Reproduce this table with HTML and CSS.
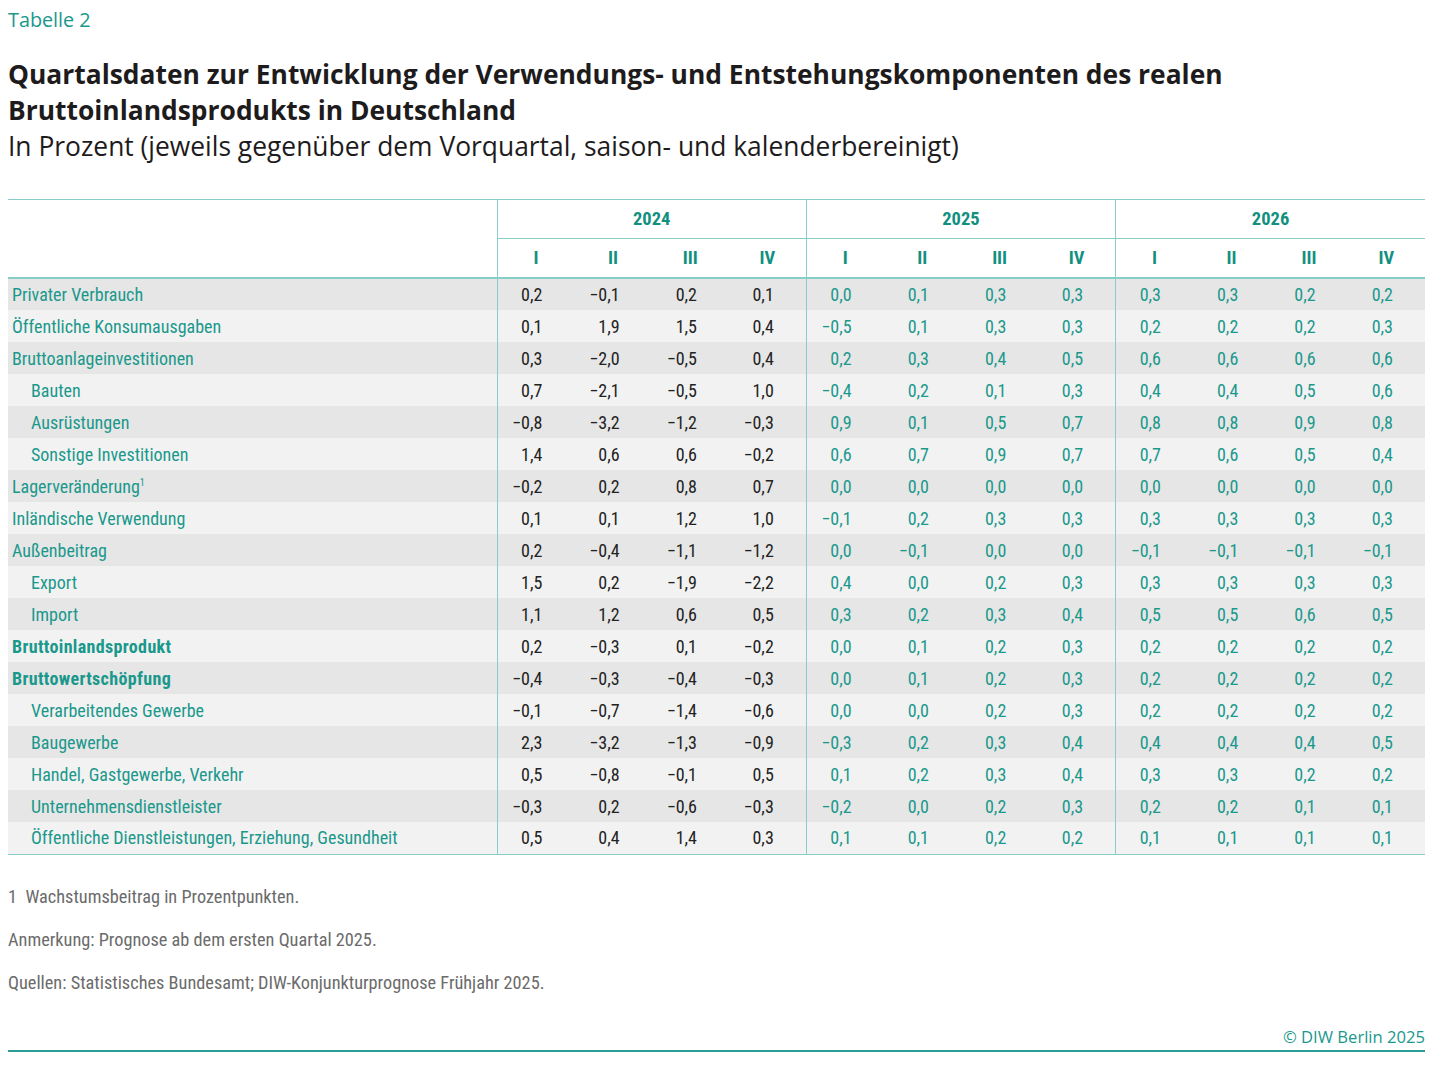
FILE: index.html
```html
<!DOCTYPE html>
<html lang="de">
<head>
<meta charset="utf-8">
<title>Tabelle 2</title>
<link rel="stylesheet" href="styles.css">
</head>
<body>
<div class="page">
  <div class="kicker">Tabelle 2</div>
  <h1 class="title">Quartalsdaten zur Entwicklung der Verwendungs- und Entstehungskomponenten des realen Bruttoinlandsprodukts in Deutschland</h1>
  <div class="subtitle">In Prozent (jeweils gegenüber dem Vorquartal, saison- und kalenderbereinigt)</div>

  <table class="data">
    <colgroup>
      <col class="c-label">
      <col><col><col><col>
      <col><col><col><col>
      <col><col><col><col>
    </colgroup>
    <thead>
      <tr class="yr">
        <th class="blank" rowspan="2"></th>
        <th colspan="4" class="grp">2024</th>
        <th colspan="4" class="grp">2025</th>
        <th colspan="4" class="grp">2026</th>
      </tr>
      <tr class="q">
        <th class="gs">I</th><th>II</th><th>III</th><th>IV</th>
        <th class="gs">I</th><th>II</th><th>III</th><th>IV</th>
        <th class="gs">I</th><th>II</th><th>III</th><th>IV</th>
      </tr>
    </thead>
    <tbody>
      <tr><th>Privater Verbrauch</th>
        <td class="gs">0,2</td><td>−0,1</td><td>0,2</td><td>0,1</td>
        <td class="gs f">0,0</td><td class="f">0,1</td><td class="f">0,3</td><td class="f">0,3</td>
        <td class="gs f">0,3</td><td class="f">0,3</td><td class="f">0,2</td><td class="f">0,2</td></tr>
      <tr><th>Öffentliche Konsumausgaben</th>
        <td class="gs">0,1</td><td>1,9</td><td>1,5</td><td>0,4</td>
        <td class="gs f">−0,5</td><td class="f">0,1</td><td class="f">0,3</td><td class="f">0,3</td>
        <td class="gs f">0,2</td><td class="f">0,2</td><td class="f">0,2</td><td class="f">0,3</td></tr>
      <tr><th>Bruttoanlageinvestitionen</th>
        <td class="gs">0,3</td><td>−2,0</td><td>−0,5</td><td>0,4</td>
        <td class="gs f">0,2</td><td class="f">0,3</td><td class="f">0,4</td><td class="f">0,5</td>
        <td class="gs f">0,6</td><td class="f">0,6</td><td class="f">0,6</td><td class="f">0,6</td></tr>
      <tr><th class="ind">Bauten</th>
        <td class="gs">0,7</td><td>−2,1</td><td>−0,5</td><td>1,0</td>
        <td class="gs f">−0,4</td><td class="f">0,2</td><td class="f">0,1</td><td class="f">0,3</td>
        <td class="gs f">0,4</td><td class="f">0,4</td><td class="f">0,5</td><td class="f">0,6</td></tr>
      <tr><th class="ind">Ausrüstungen</th>
        <td class="gs">−0,8</td><td>−3,2</td><td>−1,2</td><td>−0,3</td>
        <td class="gs f">0,9</td><td class="f">0,1</td><td class="f">0,5</td><td class="f">0,7</td>
        <td class="gs f">0,8</td><td class="f">0,8</td><td class="f">0,9</td><td class="f">0,8</td></tr>
      <tr><th class="ind">Sonstige Investitionen</th>
        <td class="gs">1,4</td><td>0,6</td><td>0,6</td><td>−0,2</td>
        <td class="gs f">0,6</td><td class="f">0,7</td><td class="f">0,9</td><td class="f">0,7</td>
        <td class="gs f">0,7</td><td class="f">0,6</td><td class="f">0,5</td><td class="f">0,4</td></tr>
      <tr><th>Lagerveränderung<sup>1</sup></th>
        <td class="gs">−0,2</td><td>0,2</td><td>0,8</td><td>0,7</td>
        <td class="gs f">0,0</td><td class="f">0,0</td><td class="f">0,0</td><td class="f">0,0</td>
        <td class="gs f">0,0</td><td class="f">0,0</td><td class="f">0,0</td><td class="f">0,0</td></tr>
      <tr><th>Inländische Verwendung</th>
        <td class="gs">0,1</td><td>0,1</td><td>1,2</td><td>1,0</td>
        <td class="gs f">−0,1</td><td class="f">0,2</td><td class="f">0,3</td><td class="f">0,3</td>
        <td class="gs f">0,3</td><td class="f">0,3</td><td class="f">0,3</td><td class="f">0,3</td></tr>
      <tr><th>Außenbeitrag</th>
        <td class="gs">0,2</td><td>−0,4</td><td>−1,1</td><td>−1,2</td>
        <td class="gs f">0,0</td><td class="f">−0,1</td><td class="f">0,0</td><td class="f">0,0</td>
        <td class="gs f">−0,1</td><td class="f">−0,1</td><td class="f">−0,1</td><td class="f">−0,1</td></tr>
      <tr><th class="ind">Export</th>
        <td class="gs">1,5</td><td>0,2</td><td>−1,9</td><td>−2,2</td>
        <td class="gs f">0,4</td><td class="f">0,0</td><td class="f">0,2</td><td class="f">0,3</td>
        <td class="gs f">0,3</td><td class="f">0,3</td><td class="f">0,3</td><td class="f">0,3</td></tr>
      <tr><th class="ind">Import</th>
        <td class="gs">1,1</td><td>1,2</td><td>0,6</td><td>0,5</td>
        <td class="gs f">0,3</td><td class="f">0,2</td><td class="f">0,3</td><td class="f">0,4</td>
        <td class="gs f">0,5</td><td class="f">0,5</td><td class="f">0,6</td><td class="f">0,5</td></tr>
      <tr><th class="strong">Bruttoinlandsprodukt</th>
        <td class="gs">0,2</td><td>−0,3</td><td>0,1</td><td>−0,2</td>
        <td class="gs f">0,0</td><td class="f">0,1</td><td class="f">0,2</td><td class="f">0,3</td>
        <td class="gs f">0,2</td><td class="f">0,2</td><td class="f">0,2</td><td class="f">0,2</td></tr>
      <tr><th class="strong">Bruttowertschöpfung</th>
        <td class="gs">−0,4</td><td>−0,3</td><td>−0,4</td><td>−0,3</td>
        <td class="gs f">0,0</td><td class="f">0,1</td><td class="f">0,2</td><td class="f">0,3</td>
        <td class="gs f">0,2</td><td class="f">0,2</td><td class="f">0,2</td><td class="f">0,2</td></tr>
      <tr><th class="ind">Verarbeitendes Gewerbe</th>
        <td class="gs">−0,1</td><td>−0,7</td><td>−1,4</td><td>−0,6</td>
        <td class="gs f">0,0</td><td class="f">0,0</td><td class="f">0,2</td><td class="f">0,3</td>
        <td class="gs f">0,2</td><td class="f">0,2</td><td class="f">0,2</td><td class="f">0,2</td></tr>
      <tr><th class="ind">Baugewerbe</th>
        <td class="gs">2,3</td><td>−3,2</td><td>−1,3</td><td>−0,9</td>
        <td class="gs f">−0,3</td><td class="f">0,2</td><td class="f">0,3</td><td class="f">0,4</td>
        <td class="gs f">0,4</td><td class="f">0,4</td><td class="f">0,4</td><td class="f">0,5</td></tr>
      <tr><th class="ind">Handel, Gastgewerbe, Verkehr</th>
        <td class="gs">0,5</td><td>−0,8</td><td>−0,1</td><td>0,5</td>
        <td class="gs f">0,1</td><td class="f">0,2</td><td class="f">0,3</td><td class="f">0,4</td>
        <td class="gs f">0,3</td><td class="f">0,3</td><td class="f">0,2</td><td class="f">0,2</td></tr>
      <tr><th class="ind">Unternehmensdienstleister</th>
        <td class="gs">−0,3</td><td>0,2</td><td>−0,6</td><td>−0,3</td>
        <td class="gs f">−0,2</td><td class="f">0,0</td><td class="f">0,2</td><td class="f">0,3</td>
        <td class="gs f">0,2</td><td class="f">0,2</td><td class="f">0,1</td><td class="f">0,1</td></tr>
      <tr><th class="ind">Öffentliche Dienstleistungen, Erziehung, Gesundheit</th>
        <td class="gs">0,5</td><td>0,4</td><td>1,4</td><td>0,3</td>
        <td class="gs f">0,1</td><td class="f">0,1</td><td class="f">0,2</td><td class="f">0,2</td>
        <td class="gs f">0,1</td><td class="f">0,1</td><td class="f">0,1</td><td class="f">0,1</td></tr>
    </tbody>
  </table>

  <div class="notes">
    <p class="note">1&nbsp;&nbsp;Wachstumsbeitrag in Prozentpunkten.</p>
    <p class="note">Anmerkung: Prognose ab dem ersten Quartal 2025.</p>
    <p class="note">Quellen: Statistisches Bundesamt; DIW-Konjunkturprognose Frühjahr 2025.</p>
  </div>

  <div class="credit">© DIW Berlin 2025</div>
</div>
</body>
</html>
```

FILE: styles.css
```css
html, body {
  margin: 0;
  padding: 0;
  background: #ffffff;
}

.page {
  width: 1417px;
  margin-left: 8px;
  padding-top: 8px;
  font-family: "Open Sans", "Noto Sans", sans-serif;
  color: #1e1e1e;
}

.kicker {
  font-size: 19.8px;
  line-height: 24px;
  font-weight: 500;
  color: #1a988c;
  margin-bottom: 24px;
}

.title {
  margin: 0;
  font-size: 26.4px;
  line-height: 36px;
  font-weight: 700;
  color: #1e1b1c;
}

.subtitle {
  font-size: 26.4px;
  line-height: 36px;
  font-weight: 400;
  color: #1e1b1c;
  margin-bottom: 35px;
}

.data {
  width: 1417px;
  border-collapse: collapse;
  table-layout: fixed;
  font-family: "Roboto Condensed", "Roboto", sans-serif;
  font-stretch: 75%;
  font-size: 18px;
}

.c-label {
  width: 489px;
}

.data thead th {
  background: #ffffff;
  color: #12907f;
  font-weight: 700;
  font-size: 18.5px;
  text-align: center;
  height: 38px;
  padding: 0;
}

.data thead tr.yr th {
  border-top: 1px solid #86cec7;
}

.data thead tr.yr th.grp {
  border-left: 1px solid #86cec7;
  border-bottom: 1px solid #86cec7;
}

.data thead tr.q th {
  border-bottom: 2px solid #86cec7;
}

.data thead th.blank {
  border-bottom: 2px solid #86cec7;
}

.data .gs {
  border-left: 1px solid #86cec7;
}

.data tbody tr {
  height: 32px;
}

.data tbody tr:nth-child(odd) {
  background: #e6e6e6;
}

.data tbody tr:nth-child(even) {
  background: #f2f2f2;
}

.data tbody tr:last-child {
  border-bottom: 1px solid #86cec7;
}

.data tbody th {
  text-align: left;
  font-weight: 400;
  color: #1a988c;
  padding: 0 0 0 4px;
  white-space: nowrap;
}

.data tbody th.ind {
  padding-left: 23px;
}

.data tbody th.strong {
  font-weight: 700;
  letter-spacing: 0.35px;
}

.data tbody th sup {
  font-size: 10px;
  line-height: 0;
  vertical-align: 7px;
}

.data td {
  text-align: right;
  padding: 0 32px 0 0;
  color: #222222;
  white-space: nowrap;
}

.data td.f {
  color: #1a988c;
}

.notes {
  margin-top: 31px;
}

.note {
  margin: 0 0 21px 0;
  font-family: "Roboto Condensed", "Roboto", sans-serif;
  font-stretch: 75%;
  font-size: 18.3px;
  line-height: 22px;
  color: #6b6b6b;
}

.credit {
  margin-top: 32px;
  text-align: right;
  font-size: 16.6px;
  line-height: 22px;
  color: #1a988c;
  padding-bottom: 2px;
  border-bottom: 2px solid #2a9d94;
}
```
